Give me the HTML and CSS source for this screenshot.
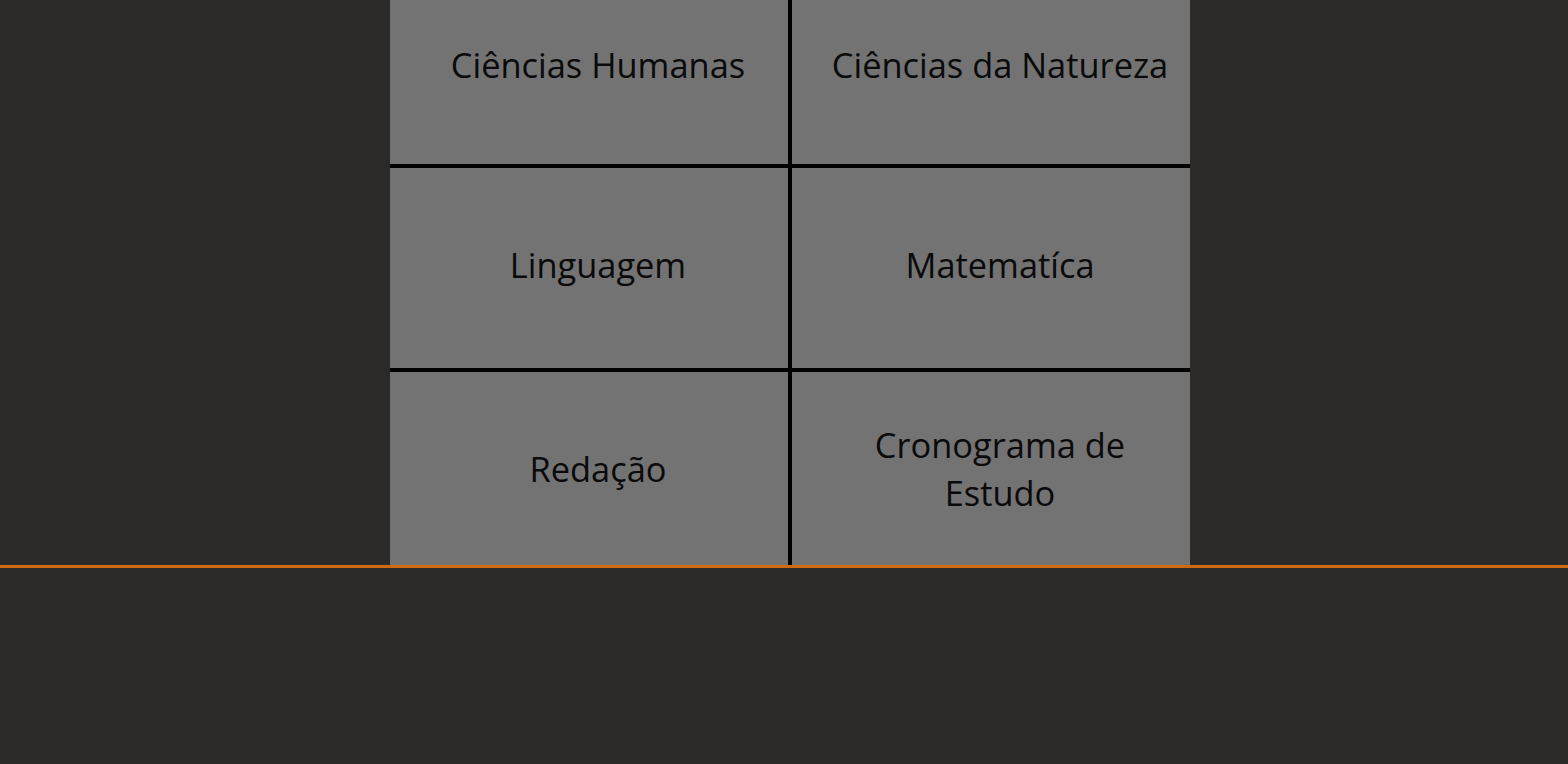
FILE: index.html
```html
<!DOCTYPE html>
<html lang="pt-BR">
<head>
    <meta charset="UTF-8">
    <meta name="viewport" content="width=device-width, initial-scale=1">
    <title>Estudos</title>
    <link rel="stylesheet" href="styles.css">
</head>
<body>

<div class="pagina">
    <div class="conteudo">
        <div class="materias">
            <a class="materia" href="#">Ciências Humanas</a>
            <a class="materia" href="#">Ciências da Natureza</a>
            <a class="materia" href="#">Linguagem</a>
            <a class="materia" href="#">Matematíca</a>
            <a class="materia" href="#">Redação</a>
            <a class="materia" href="#">Cronograma de Estudo</a>
        </div>
    </div>

    <footer class="rodape"></footer>
</div>

</body>
</html>
```

FILE: styles.css
```css
html, body {
    height: 100%;
    margin: 0;
}

body {
    background: #2b2a28;
    font-family: "Open Sans", sans-serif;
    overflow: hidden;
}

.pagina {
    display: flex;
    flex-direction: column;
    height: 100%;
}

.conteudo {
    height: 565px;
    overflow: hidden;
    display: flex;
    justify-content: center;
    padding-left: 12px;
}

.materias {
    margin-top: -29px;
    width: 800px;
    display: grid;
    grid-template-columns: 1fr 1fr;
    grid-template-rows: 193px 200px 200px;
    gap: 4px;
    background: #000;
    align-self: flex-start;
}

.materia {
    background: #737373;
    color: #0a0a0a;
    text-decoration: none;
    font-size: 34.4px;
    line-height: 48px;
    text-align: center;
    display: flex;
    align-items: center;
    justify-content: center;
    padding: 0 15px 6px 33px;
}

.rodape {
    flex: 1;
    border-top: 3px solid #d06a10;
    background: #2b2a28;
}
```
